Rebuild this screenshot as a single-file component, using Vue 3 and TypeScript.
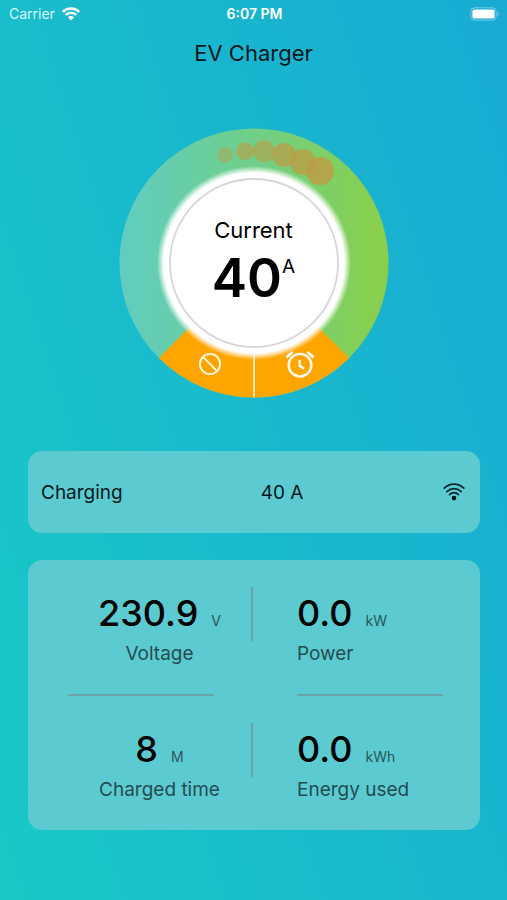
<script setup lang="ts">
interface Metric {
  value: string
  unit: string
  label: string
}

interface Bubble {
  x: number
  y: number
  r: number
  opacity: number
}

const current = 40

const rows: Metric[][] = [
  [
    { value: '230.9', unit: 'V', label: 'Voltage' },
    { value: '0.0', unit: 'kW', label: 'Power' },
  ],
  [
    { value: '8', unit: 'M', label: 'Charged time' },
    { value: '0.0', unit: 'kWh', label: 'Energy used' },
  ],
]

// Trail of bubbles running clockwise along the ring
const bubbles: Bubble[] = [
  { x: 106, y: 27, r: 8, opacity: 0.42 },
  { x: 126, y: 23, r: 9, opacity: 0.6 },
  { x: 145, y: 23, r: 11, opacity: 0.6 },
  { x: 165, y: 27, r: 12, opacity: 0.72 },
  { x: 184, y: 34, r: 13, opacity: 0.76 },
  { x: 201, y: 43, r: 14, opacity: 0.84 },
]
</script>

<template>
  <div class="screen">
    <header class="status">
      <div class="carrier">
        <span>Carrier</span>
        <svg width="18" height="14" viewBox="0 0 18 14" aria-hidden="true">
          <g fill="none" stroke="#fff" stroke-width="2.4">
            <path d="M0.8 4.9A11.6 11.6 0 0 1 17.2 4.9" />
            <path d="M3.7 7.9A7.5 7.5 0 0 1 14.3 7.9" />
          </g>
          <path d="M6 10.3A4.2 4.2 0 0 1 12 10.3L9 13.6Z" fill="#fff" />
        </svg>
      </div>
      <div class="clock">6:07 PM</div>
      <div class="battery">
        <svg width="30" height="14" viewBox="0 0 30 14" aria-hidden="true">
          <rect x="0.8" y="0.8" width="25.4" height="12.4" rx="3.8" fill="none" stroke="#fff" stroke-opacity="0.4" />
          <rect x="2.4" y="2.4" width="22.2" height="9.2" rx="2.2" fill="#fff" />
          <path d="M27.6 4.8C29.4 5.6 29.4 8.4 27.6 9.2Z" fill="#fff" fill-opacity="0.4" />
        </svg>
      </div>
    </header>

    <h1 class="title">EV Charger</h1>

    <main>
      <section class="dial">
        <svg class="dial-face" viewBox="0 0 270 270" aria-hidden="true">
          <defs>
            <linearGradient id="ring" x1="0" y1="0" x2="1" y2="0">
              <stop offset="0" stop-color="#60cdc2" />
              <stop offset="0.5" stop-color="#70cf88" />
              <stop offset="1" stop-color="#8acf48" />
            </linearGradient>
            <radialGradient id="glow">
              <stop offset="0.93" stop-color="#fff" />
              <stop offset="1" stop-color="#fff" stop-opacity="0" />
            </radialGradient>
          </defs>
          <circle cx="135" cy="135" r="134.5" fill="url(#ring)" />
          <path d="M135 135L39.9 230.1A134.5 134.5 0 0 0 230.1 230.1Z" fill="#ffa500" />
          <path d="M135 225V269.5" stroke="#fff3dc" stroke-width="1.6" />
          <circle v-for="(b, i) in bubbles" :key="i" :cx="b.x" :cy="b.y" :r="b.r" fill="#bd9d45" :fill-opacity="b.opacity" />
          <circle cx="135" cy="135" r="97" fill="url(#glow)" />
          <circle cx="135" cy="135" r="84" fill="#fff" stroke="#d8d6da" stroke-width="1.8" />
        </svg>
        <div class="reading">
          <div class="reading-label">Current</div>
          <div class="reading-value">{{ current }}<sup>A</sup></div>
        </div>
        <button class="dial-button stop" type="button" aria-label="Stop charging">
          <svg width="24" height="24" viewBox="0 0 24 24" fill="none" stroke="#fff8e8" stroke-width="1.8">
            <circle cx="12" cy="12" r="10.1" />
            <path d="M4.9 4.9L19.1 19.1" />
          </svg>
        </button>
        <button class="dial-button timer" type="button" aria-label="Schedule charging">
          <svg width="30" height="28" viewBox="0 0 30 28" fill="none" stroke="#fffaf0" stroke-width="2.4">
            <circle cx="15" cy="15.2" r="11.3" />
            <path d="M14.6 10V15.8L19.2 18.8" />
            <path d="M1.4 7.4L7.6 2M22.4 2L28.6 7.4" stroke-width="2.8" />
          </svg>
        </button>
      </section>

      <section class="card charging">
        <span>Charging</span>
        <span class="charging-value">{{ current }} A</span>
        <svg width="22" height="18" viewBox="0 0 22 18" aria-hidden="true">
          <g fill="none" stroke="#08282d" stroke-width="1.7" stroke-linecap="round">
            <path d="M1.2 5.2C6.8 -0.3 15.2 -0.3 20.8 5.2" />
            <path d="M3.8 8.6C8 4.6 14 4.6 18.2 8.6" />
            <path d="M6.5 11.7C9.2 9.2 12.8 9.2 15.5 11.7" />
          </g>
          <circle cx="11" cy="15.1" r="2.3" fill="#001214" />
        </svg>
      </section>

      <section class="card metrics">
        <div v-for="(row, i) in rows" :key="i" class="row">
          <div v-for="m in row" :key="m.label" class="metric">
            <div class="amount">
              <span class="value">{{ m.value }}</span>
              <span class="unit">{{ m.unit }}</span>
            </div>
            <div class="label">{{ m.label }}</div>
          </div>
        </div>
      </section>
    </main>
  </div>
</template>

<style>
body {
  margin: 0;
}
</style>

<style scoped>
.screen {
  box-sizing: border-box;
  min-height: 100vh;
  padding-bottom: 24px;
  background: linear-gradient(72deg, #18c9c5 0%, #19b9cd 50%, #18abd3 100%);
  color: #04191d;
  font-family: Inter, "Liberation Sans", sans-serif;
}

.status {
  display: grid;
  grid-template-columns: 1fr auto 1fr;
  align-items: center;
  height: 27px;
  padding: 0 7px 0 9px;
  color: #fff;
  font-size: 14px;
}

.carrier {
  display: flex;
  align-items: center;
  gap: 7px;
  color: #d8f6fa;
}

.clock {
  font-weight: 600;
}

.battery {
  display: flex;
  justify-content: flex-end;
}

.title {
  margin: 10px 0 0;
  font-size: 22px;
  font-weight: 400;
  line-height: 32px;
  text-align: center;
}

.dial {
  position: relative;
  display: grid;
  width: 270px;
  margin: 59px auto 0;
}

.dial-face {
  display: block;
  grid-area: 1 / 1;
  width: 100%;
}

.reading {
  z-index: 1;
  grid-area: 1 / 1;
  place-self: center;
  padding-top: 6px;
  color: #000;
  text-align: center;
}

.reading-label {
  font-size: 22px;
  line-height: 24px;
}

.reading-value {
  display: flex;
  justify-content: center;
  font-size: 53px;
  font-weight: 600;
  line-height: 72px;
}

.reading-value sup {
  font-size: 19px;
  font-weight: 400;
  line-height: 50px;
}

.dial-button {
  position: absolute;
  top: 224px;
  display: grid;
  padding: 0;
  border: 0;
  background: none;
  cursor: pointer;
}

.stop {
  left: 79px;
}

.timer {
  top: 222px;
  left: 166px;
}

.card {
  margin: 0 27px 0 28px;
  border-radius: 14px;
  background: #5bcbd1;
}

.charging {
  display: grid;
  grid-template-columns: 1fr auto 1fr;
  align-items: center;
  height: 82px;
  margin-top: 53px;
  padding: 0 15px 0 13px;
  font-size: 19px;
}

.charging-value {
  margin-left: 58px;
}

.charging svg {
  justify-self: end;
}

.metrics {
  margin-top: 27px;
  overflow: hidden;
}

.row {
  display: grid;
  grid-template-columns: 223fr 229fr;
}

.metric {
  position: relative;
  padding: 33px 0 28px 40px;
  text-align: center;
}

.metric + .metric {
  padding-left: 46px;
  text-align: left;
}

.metric + .metric::before {
  position: absolute;
  top: 27px;
  left: 0;
  width: 2px;
  height: 54px;
  background: #6ba3a8;
  content: "";
}

.row:first-child .metric::after {
  display: block;
  width: 80%;
  height: 2px;
  margin-top: 28px;
  margin-bottom: -28px;
  background: #6ba3a8;
  content: "";
}

.amount {
  display: flex;
  align-items: baseline;
  justify-content: center;
  gap: 13px;
}

.metric + .metric .amount {
  justify-content: flex-start;
}

.value {
  color: #000;
  font-size: 36px;
  font-weight: 500;
  line-height: 40px;
}

.unit {
  color: #2c5459;
  font-size: 14px;
  line-height: 16px;
}

.label {
  margin-top: 9px;
  color: #244c51;
  font-size: 19px;
  line-height: 24px;
}
</style>
